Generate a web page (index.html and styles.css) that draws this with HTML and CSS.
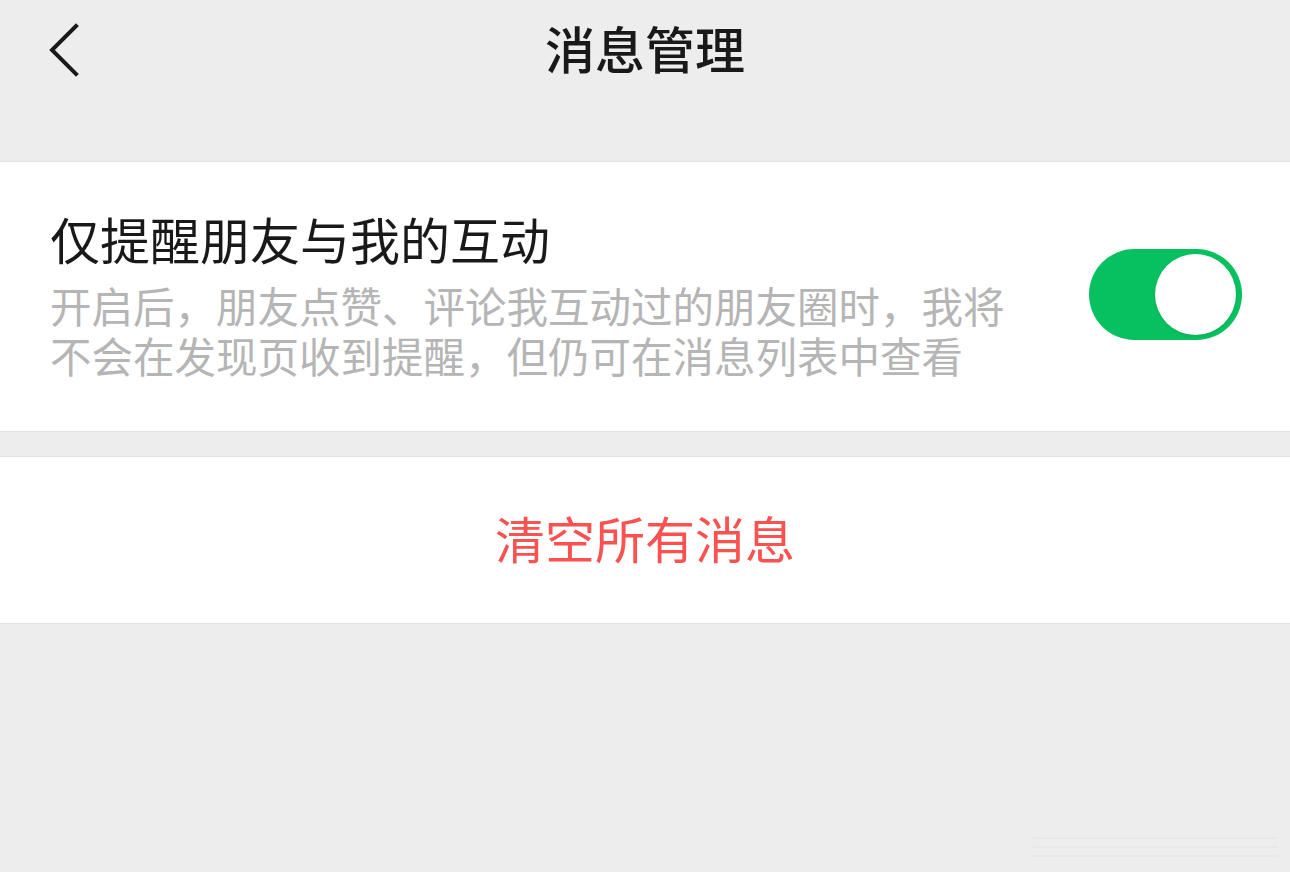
FILE: index.html
```html
<!DOCTYPE html>
<html lang="zh-CN">
<head>
    <meta charset="UTF-8">
    <meta name="viewport" content="width=device-width, initial-scale=1.0">
    <title>消息管理</title>
    <link rel="stylesheet" href="styles.css">
</head>
<body>
    <header class="nav-bar">
        <div class="nav-left">
            <svg class="back-icon" width="40" height="60" viewBox="0 0 40 60">
                <path d="M34 6 L10 30 L34 54" fill="none" stroke="#191919" stroke-width="4" stroke-linecap="square"/>
            </svg>
        </div>
        <h1 class="nav-title">消息管理</h1>
        <div class="nav-right"></div>
    </header>

    <section class="cell-group">
        <div class="switch-cell">
            <div class="switch-text">
                <div class="cell-title">仅提醒朋友与我的互动</div>
                <div class="cell-desc">开启后，朋友点赞、评论我互动过的朋友圈时，我将不会在发现页收到提醒，但仍可在消息列表中查看</div>
            </div>
            <div class="switch is-on">
                <span class="switch-knob"></span>
            </div>
        </div>
    </section>

    <section class="cell-group">
        <div class="action-cell">清空所有消息</div>
    </section>

    <div class="watermark"></div>
</body>
</html>
```

FILE: styles.css
```css
body {
    margin: 0;
    background: #ededed;
    font-family: "Noto Sans CJK SC", "Noto Sans", sans-serif;
    color: #191919;
    min-height: 872px;
    position: relative;
    overflow: hidden;
}
.nav-bar {
    display: grid;
    grid-template-columns: 1fr auto 1fr;
    align-items: center;
    height: 100px;
    margin-bottom: 61px;
}
.nav-left {
    display: flex;
    align-items: center;
    padding-left: 42px;
}
.back-icon {
    display: block;
}
.nav-title {
    margin: 0;
    font-size: 50px;
    font-weight: 500;
    line-height: 100px;
    margin-top: -6px;
}
.cell-group {
    background: #fff;
    border-top: 1px solid #e2e2e2;
    border-bottom: 1px solid #e2e2e2;
    margin-bottom: 24px;
}
.switch-cell {
    display: flex;
    align-items: center;
    padding: 46px 48px 51px 50px;
}
.switch-text {
    width: 975px;
}
.cell-title {
    font-size: 50px;
    line-height: 60px;
}
.cell-desc {
    margin-top: 12px;
    font-size: 41.5px;
    line-height: 50px;
    color: #b5b5b5;
}
.switch {
    margin-left: auto;
    width: 153px;
    height: 91px;
    border-radius: 46px;
    background: #07c160;
    display: flex;
    align-items: center;
    justify-content: flex-end;
    padding-right: 6px;
    box-sizing: border-box;
}
.switch-knob {
    width: 81px;
    height: 81px;
    border-radius: 50%;
    background: #fff;
    box-shadow: 0 1px 3px rgba(0, 0, 0, 0.12);
}
.action-cell {
    height: 166px;
    line-height: 160px;
    text-align: center;
    font-size: 50px;
    color: #fa5151;
}
.watermark {
    position: absolute;
    right: 12px;
    bottom: 14px;
    width: 245px;
    height: 28px;
    background: repeating-linear-gradient(180deg, transparent 0, transparent 7px, rgba(0, 0, 0, 0.025) 7px, rgba(0, 0, 0, 0.025) 9px);
}
```
